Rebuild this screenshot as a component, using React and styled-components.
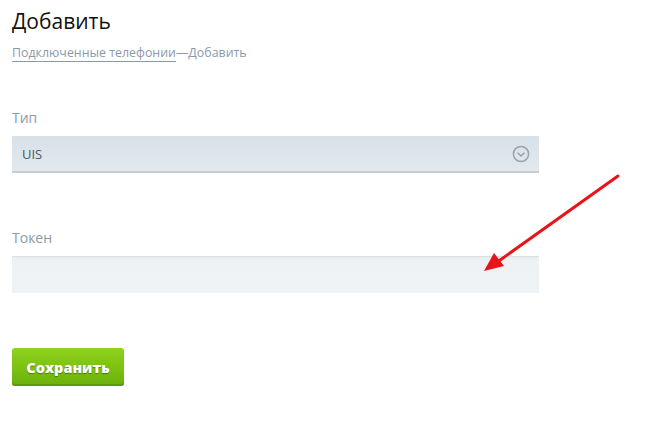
import { createGlobalStyle, styled } from "styled-components";

const GlobalStyle = createGlobalStyle`
  body {
    margin: 0;
    background: #fff;
    font-family: "Open Sans", "Noto Sans", sans-serif;
  }
`;

const Page = styled.div`
  position: relative;
  width: 669px;
  height: 424px;
  padding: 6px 12px 0;
  box-sizing: border-box;
  overflow: hidden;
`;

const Title = styled.h1`
  margin: 0;
  font-size: 21px;
  font-weight: 400;
  line-height: 30px;
  color: #111;
`;

const Crumbs = styled.div`
  margin-top: 8px;
  font-size: 12.4px;
  line-height: 18px;
  color: #8b9aa9;
`;

const CrumbLink = styled.a`
  color: #8b9aa9;
  text-decoration: none;
  border-bottom: 1px solid #8b9aa9;
`;

const Form = styled.form`
  width: 527px;
  margin-top: 46px;
  display: flex;
  flex-direction: column;
`;

const Field = styled.div`
  display: flex;
  flex-direction: column;
  margin-bottom: ${(p) => p.$gap || 0}px;
`;

const Label = styled.label`
  font-size: 14px;
  line-height: 20px;
  color: #8c99a6;
  margin-bottom: 8px;
`;

const Select = styled.div`
  height: 35px;
  display: flex;
  align-items: center;
  justify-content: space-between;
  padding: 0 9px 0 10px;
  background: linear-gradient(#d8e1e8, #e2e9ee);
  border-bottom: 2px solid #c5cdd3;
  font-size: 13px;
  color: #4c5864;
`;

const Input = styled.input`
  height: 37px;
  box-sizing: border-box;
  border: none;
  outline: none;
  background: linear-gradient(#e6ebef, #eef2f5 4px, #eff3f6);
  box-shadow: inset 0 1px 1px rgba(0, 0, 0, 0.06);
`;

const SaveButton = styled.button`
  align-self: flex-start;
  width: 112px;
  height: 38px;
  border: none;
  border-radius: 3px;
  background: linear-gradient(#8fd31c, #6bb00b);
  box-shadow: inset 0 -2px 0 #5c9a08;
  color: #fff;
  font-family: "Open Sans", sans-serif;
  font-weight: 800;
  font-size: 14.5px;
  text-shadow: 0 1px 1px rgba(0, 0, 0, 0.35);
  cursor: pointer;
`;

const Arrow = styled.svg`
  position: absolute;
  left: 470px;
  top: 165px;
`;

const ChevronCircle = () => (
  <svg width="18" height="18" viewBox="0 0 18 18">
    <circle cx="9" cy="9" r="7.6" fill="none" stroke="#98a3ab" strokeWidth="1.5" />
    <path d="M5.6 7.7 L9 11 L12.4 7.7" fill="none" stroke="#98a3ab" strokeWidth="1.5" />
  </svg>
);

export default function App() {
  return (
    <Page>
      <GlobalStyle />
      <Title>Добавить</Title>
      <Crumbs>
        <CrumbLink href="#">Подключенные телефонии</CrumbLink>—Добавить
      </Crumbs>
      <Form onSubmit={(e) => e.preventDefault()}>
        <Field $gap={55}>
          <Label>Тип</Label>
          <Select>
            <span>UIS</span>
            <ChevronCircle />
          </Select>
        </Field>
        <Field $gap={55}>
          <Label>Токен</Label>
          <Input />
        </Field>
        <SaveButton type="submit">Сохранить</SaveButton>
      </Form>
      <Arrow width="160" height="115" viewBox="0 0 160 115">
        <line x1="148" y1="11" x2="26" y2="98" stroke="#e8141a" strokeWidth="3" strokeLinecap="round" />
        <polygon points="14,106 24,88 34,101" fill="#e8141a" />
      </Arrow>
    </Page>
  );
}
